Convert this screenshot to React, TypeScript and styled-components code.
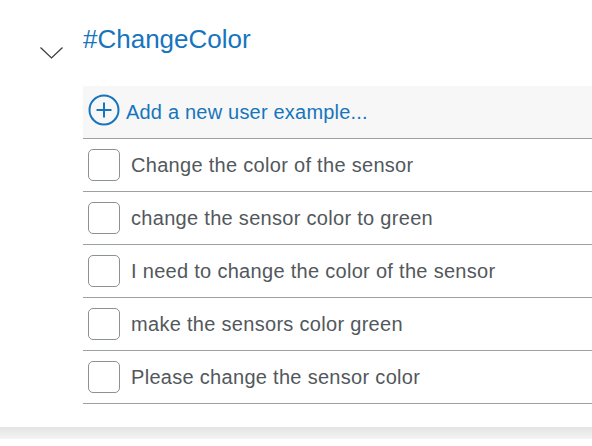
import styled, { createGlobalStyle } from "styled-components";

const GlobalStyle = createGlobalStyle`
  html, body {
    margin: 0;
    padding: 0;
    background: #ffffff;
    font-family: "Liberation Sans", Arial, Helvetica, sans-serif;
  }
`;

const Card = styled.div`
  width: 592px;
  height: 427px;
  background: #ffffff;
  display: grid;
  grid-template-columns: 83px 1fr;
  overflow: hidden;
`;

const Toggle = styled.div`
  padding: 47px 0 0 40px;
  svg {
    display: block;
  }
`;

const Content = styled.div`
  display: flex;
  flex-direction: column;
  padding-top: 24px;
`;

const Title = styled.h2`
  margin: 0;
  height: 30px;
  line-height: 30px;
  font-size: 26px;
  font-weight: 400;
  color: #1675bd;
`;

const List = styled.div`
  margin-top: 32px;
  display: flex;
  flex-direction: column;
`;

const Row = styled.div<{ shaded?: boolean }>`
  height: 52px;
  border-bottom: 1px solid #9ca1a2;
  display: flex;
  align-items: center;
  background: ${(p) => (p.shaded ? "#f7f7f7" : "#ffffff")};
`;

const AddIcon = styled.div`
  margin: -5px 0 0 5px;
  width: 32px;
  height: 32px;
  svg {
    display: block;
  }
`;

const AddText = styled.span`
  margin-left: 6px;
  font-size: 20px;
  letter-spacing: 0.2px;
  color: #1675bd;
`;

const Check = styled.div`
  margin-left: 5px;
  width: 30px;
  height: 30px;
  border: 1px solid #8c9194;
  border-radius: 5px;
  background: #ffffff;
  flex-shrink: 0;
`;

const Label = styled.span`
  margin-left: 11px;
  font-size: 20px;
  letter-spacing: 0.3px;
  color: #52585c;
  white-space: nowrap;
`;

const Shadow = styled.div`
  height: 11px;
  background: linear-gradient(#e3e3e3, #f2f2f2);
  border-bottom: 1px solid #f4f4f4;
`;

const examples = [
  "Change the color of the sensor",
  "change the sensor color to green",
  "I need to change the color of the sensor",
  "make the sensors color green",
  "Please change the sensor color",
];

export default function App() {
  return (
    <>
      <GlobalStyle />
      <Card>
        <Toggle>
          <svg width="23" height="12" viewBox="0 0 23 12">
            <polyline
              points="0.5,0.5 11.5,11 22.5,0.5"
              fill="none"
              stroke="#3a3a3a"
              strokeWidth="1.2"
            />
          </svg>
        </Toggle>
        <Content>
          <Title>#ChangeColor</Title>
          <List>
            <Row shaded>
              <AddIcon>
                <svg width="32" height="32" viewBox="0 0 32 32">
                  <circle cx="16" cy="16" r="14.5" fill="none" stroke="#1675bd" strokeWidth="2" />
                  <line x1="16" y1="8.5" x2="16" y2="23.5" stroke="#1675bd" strokeWidth="2" />
                  <line x1="8.5" y1="16" x2="23.5" y2="16" stroke="#1675bd" strokeWidth="2" />
                </svg>
              </AddIcon>
              <AddText>Add a new user example...</AddText>
            </Row>
            {examples.map((text) => (
              <Row key={text}>
                <Check />
                <Label>{text}</Label>
              </Row>
            ))}
          </List>
        </Content>
      </Card>
      <Shadow />
    </>
  );
}
